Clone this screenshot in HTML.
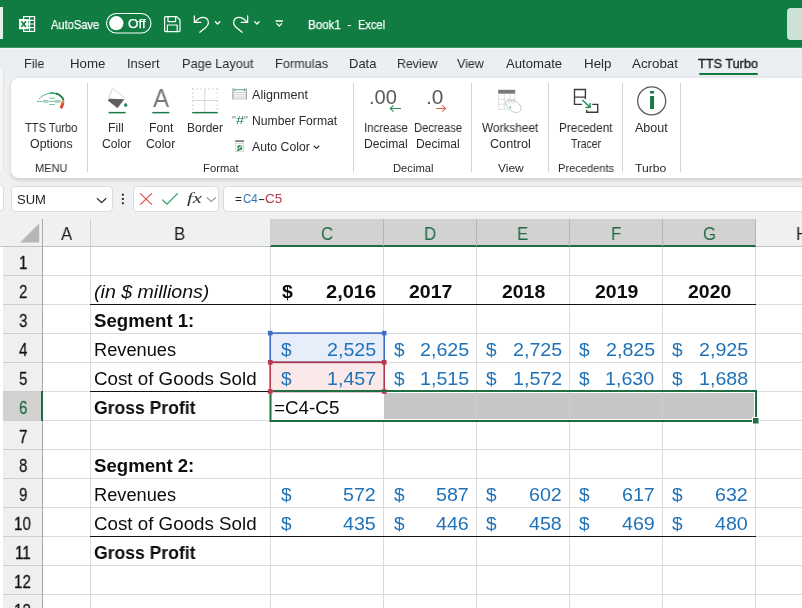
<!DOCTYPE html>
<html lang="en">
<head>
<meta charset="utf-8">
<title>Book1 - Excel</title>
<style>
html,body{margin:0;padding:0;}
body{width:802px;height:608px;overflow:hidden;position:relative;background:#fff;font-family:"Liberation Sans",sans-serif;}
.a{position:absolute;}
.t{position:absolute;line-height:1;white-space:pre;transform-origin:0 0;will-change:transform;}
#title{left:0;top:0;width:802px;height:47px;background:#107c41;}
#title2{left:0;top:47px;width:802px;height:1px;background:#3c9365;}
#chrome{left:0;top:48px;width:802px;height:198px;background:#eff0f1;}
#tabs{left:0;top:48px;width:802px;height:30px;background:#ebeff4;border-top:1px solid #f2f5f8;box-sizing:border-box;}
#ribbon{left:11px;top:78px;width:800px;height:100px;background:#fff;border-radius:8px;box-shadow:0 1.5px 4px rgba(0,0,0,.16);}
.sep{position:absolute;top:83px;width:1px;height:89px;background:#d4d4d4;}
.box{position:absolute;top:186px;height:24px;background:#fff;border:1px solid #dcdcdc;border-radius:4px;}
#grid{left:0;top:246px;width:802px;height:362px;background:#fff;}
.vl{position:absolute;top:247px;width:1px;height:361px;background:#dbdbdb;}
.hl{position:absolute;left:43px;width:759px;height:1px;background:#dbdbdb;}
.rh{position:absolute;left:3px;width:39px;height:28px;background:#efefef;border-bottom:1px solid #cfcfcf;}
.bk{position:absolute;height:1.5px;background:#111;}
</style>
</head>
<body>
<div class="a" id="title"></div>
<div class="a" id="title2"></div>
<div class="a" id="chrome"></div>
<div class="a" id="tabs"></div>
<div class="a" style="left:0;top:7px;width:3px;height:32px;background:#e3f0e8;"></div>
<div class="a" style="left:787px;top:8px;width:30px;height:32px;background:#cce2d5;border-radius:4px;"></div>
<div class="a" style="left:699px;top:72.5px;width:59px;height:2.6px;background:#107c41;border-radius:1.3px;"></div>
<div class="a" style="left:0;top:69px;width:3px;height:101px;background:#f5f7f9;border-right:1px solid #e0e4e8;"></div>
<div class="a" id="ribbon"></div>
<div class="sep" style="left:87px"></div>
<div class="sep" style="left:353px"></div>
<div class="sep" style="left:471px"></div>
<div class="sep" style="left:548px"></div>
<div class="sep" style="left:622px"></div>
<div class="sep" style="left:680px"></div>
<!-- formula bar -->
<div class="a" style="left:-2px;top:185px;width:4px;height:24px;background:#fff;border:1px solid #dcdcdc;border-radius:3px;"></div>
<div class="box" style="left:11px;width:100px;"></div>
<div class="box" style="left:133px;width:84px;"></div>
<div class="box" style="left:223px;width:600px;"></div>
<!-- column header -->
<div class="a" style="left:270px;top:219px;width:486px;height:26px;background:#d2d2d2;"></div>
<div class="a" style="left:270px;top:245px;width:486px;height:2px;background:#1e6e42;"></div>
<div class="a" id="grid" style="top:247px"></div>
<div class="a" style="left:0;top:246px;width:270px;height:1px;background:#c4c4c4;"></div>
<div class="a" style="left:756px;top:246px;width:46px;height:1px;background:#c4c4c4;"></div>
<div class="a" style="left:42px;top:219px;width:1px;height:389px;background:#a8a8a8;"></div>
<div class="a" style="left:90px;top:219px;width:1px;height:27px;background:#d0d0d0;"></div>
<div class="a" style="left:270px;top:219px;width:1px;height:27px;background:#d0d0d0;"></div>
<div class="a" style="left:383px;top:219px;width:1px;height:27px;background:#b4b4b4;"></div>
<div class="a" style="left:476px;top:219px;width:1px;height:27px;background:#b4b4b4;"></div>
<div class="a" style="left:569px;top:219px;width:1px;height:27px;background:#b4b4b4;"></div>
<div class="a" style="left:662px;top:219px;width:1px;height:27px;background:#b4b4b4;"></div>
<div class="a" style="left:755px;top:219px;width:1px;height:27px;background:#b4b4b4;"></div>
<div class="vl" style="left:90px"></div>
<div class="vl" style="left:270px"></div>
<div class="vl" style="left:383px"></div>
<div class="vl" style="left:476px"></div>
<div class="vl" style="left:569px"></div>
<div class="vl" style="left:662px"></div>
<div class="vl" style="left:755px"></div>
<div class="hl" style="top:275px"></div>
<div class="hl" style="top:304px"></div>
<div class="hl" style="top:333px"></div>
<div class="hl" style="top:362px"></div>
<div class="hl" style="top:391px"></div>
<div class="hl" style="top:420px"></div>
<div class="hl" style="top:449px"></div>
<div class="hl" style="top:478px"></div>
<div class="hl" style="top:507px"></div>
<div class="hl" style="top:536px"></div>
<div class="hl" style="top:565px"></div>
<div class="hl" style="top:594px"></div>
<div class="hl" style="top:623px"></div>
<div class="rh" style="top:247px"></div>
<div class="rh" style="top:276px"></div>
<div class="rh" style="top:305px"></div>
<div class="rh" style="top:334px"></div>
<div class="rh" style="top:363px"></div>
<div class="rh" style="top:392px;background:#d2d2d2;"></div>
<div class="a" style="left:41px;top:391px;width:2px;height:30px;background:#1e6e42;"></div>
<div class="rh" style="top:421px"></div>
<div class="rh" style="top:450px"></div>
<div class="rh" style="top:479px"></div>
<div class="rh" style="top:508px"></div>
<div class="rh" style="top:537px"></div>
<div class="rh" style="top:566px"></div>
<div class="rh" style="top:595px"></div>
<div class="bk" style="left:90px;top:303.6px;width:666px;"></div>
<div class="bk" style="left:90px;top:390.6px;width:181px;"></div>
<div class="bk" style="left:90px;top:535.6px;width:666px;"></div>
<div class="a" style="left:271px;top:334px;width:113px;height:28px;background:#e8eef9;"></div>
<div class="a" style="left:271px;top:363px;width:113px;height:28px;background:#fbe9ea;"></div>
<div class="a" style="left:384px;top:392.6px;width:370.3px;height:26.4px;background:#c6c6c6;"></div>
<div class="a" style="left:271px;top:392px;width:113px;height:28px;background:#fff;"></div>
<div class="a" style="left:476px;top:392.6px;width:1px;height:26.4px;background:#cfcfcf;"></div>
<div class="a" style="left:569px;top:392.6px;width:1px;height:26.4px;background:#cfcfcf;"></div>
<div class="a" style="left:662px;top:392.6px;width:1px;height:26.4px;background:#cfcfcf;"></div>
<svg class="a" style="left:0;top:0" width="802" height="608" viewBox="0 0 802 608">
<!-- corner triangle -->
<polygon points="39.2,223.6 39.2,242.4 20,242.4" fill="#b7b7b7"/>
<!-- range boxes -->
<rect x="270.2" y="333.1" width="114" height="29.2" fill="none" stroke="#3f6fc4" stroke-width="1.6"/>
<rect x="270.2" y="362.3" width="114" height="29.2" fill="none" stroke="#b5384b" stroke-width="1.6"/>
<g fill="#3f6fc4"><rect x="267.9" y="330.8" width="4.6" height="4.6"/><rect x="381.9" y="330.8" width="4.6" height="4.6"/></g>
<g fill="#b5384b"><rect x="267.9" y="360" width="4.6" height="4.6"/><rect x="381.9" y="360" width="4.6" height="4.6"/><rect x="267.9" y="389.2" width="4.6" height="4.6"/><rect x="381.9" y="389.2" width="4.6" height="4.6"/></g>
<!-- active selection -->
<path d="M273 391 H756 V418 M752 421 H270.5 V394" fill="none" stroke="#1e6e42" stroke-width="2"/>
<rect x="752.5" y="417.5" width="6.5" height="6.5" fill="#1e6e42" stroke="#fff" stroke-width="1"/>
<!-- excel logo -->
<g stroke="#fff" fill="none" stroke-width="1.2">
<rect x="23.6" y="16.6" width="11" height="14.8"/>
<path d="M23.6 20.4H34.6M23.6 24H34.6M23.6 27.6H34.6M29.6 16.6V31.4"/>
</g>
<rect x="19" y="19" width="9.4" height="10.2" fill="#fff"/>
<path d="M21.4 21.2L26 27M26 21.2L21.4 27" stroke="#107c41" stroke-width="1.5" fill="none"/>
<!-- autosave toggle -->
<rect x="106.5" y="13.5" width="44.5" height="19.5" rx="9.75" fill="none" stroke="#fff" stroke-width="1.1"/>
<circle cx="116.3" cy="23.2" r="7.1" fill="#fff"/>
<!-- save -->
<g stroke="#fff" fill="none" stroke-width="1.2" stroke-linejoin="round">
<path d="M164.6 17.6a1 1 0 0 1 1-1H176.6L180 20V30.6a1 1 0 0 1-1 1H165.6a1 1 0 0 1-1-1Z"/>
<path d="M168 16.8V21.6H175.6V16.8M167.4 31.4V25H177.2V31.4"/>
</g>
<!-- undo -->
<g stroke="#fff" fill="none" stroke-width="1.3" stroke-linecap="round" stroke-linejoin="round">
<path d="M194.4 16V22.4H200.8"/>
<path d="M195 22.2C198.4 17.8 203.4 15.8 206.6 18.6C209.4 21.2 208.8 24.6 206 27.2L199.8 32.2"/>
<path d="M215.4 21.8L217.6 24L219.8 21.8"/>
<!-- redo -->
<path d="M247.6 16V22.4H241.2"/>
<path d="M247 22.2C243.6 17.8 238.6 15.8 235.4 18.6C232.6 21.2 233.2 24.6 236 27.2L242.2 32.2"/>
<path d="M254.8 21.8L257 24L259.2 21.8"/>
<!-- customize -->
<path d="M276 21H282.4M276.8 23.6L279.2 26L281.6 23.6"/>
</g>
<!-- ===== ribbon icons ===== -->
<defs>
<linearGradient id="gArc" x1="0" y1="0" x2="1" y2="0"><stop offset="0" stop-color="#35b36a"/><stop offset="0.6" stop-color="#1e8a4c"/><stop offset="1" stop-color="#14643a"/></linearGradient>
<linearGradient id="gTip" x1="0" y1="0" x2="0" y2="1"><stop offset="0" stop-color="#e8a35a"/><stop offset="0.45" stop-color="#e8532d"/><stop offset="1" stop-color="#d52b1e"/></linearGradient>
</defs>
<!-- TTS turbo gauge -->
<path d="M39.1 98.9C43 94.6 49 92.6 54 93.2" fill="none" stroke="#3aa96a" stroke-width="0.9"/>
<path d="M50 92.9C53 92.6 56 93.2 58 94.4" fill="none" stroke="#2a9458" stroke-width="1.2"/>
<path d="M56 93.4C60 95 63 97.4 63.6 100.6" fill="none" stroke="#1d7a45" stroke-width="1.8"/>
<path d="M61.8 101L64.1 100.4L64.2 104.6L62.2 108.8L59.8 107.8Z" fill="url(#gTip)"/>
<g stroke="#3aa56a" stroke-width="0.7" fill="none"><path d="M36.6 101.4H42.6M48.8 101.4H54.6M43 100.7H48.4M54.8 100.7H60.6M43 102.1H48.4M54.8 102.1H60.6M49.4 98.2H54.8M49.4 104.5H54.8"/></g>
<!-- Fill color bucket -->
<path d="M112.5 88.3L125 97.9L117.5 107.9L107.9 100.4Z" fill="none" stroke="#cccccc" stroke-width="0.8"/>
<path d="M107.9 100.4L109.6 98.8L124.2 99.2L117.5 107.9Z" fill="#5e5e5e"/>
<path d="M125.7 102.7L127.1 104.6a1.5 1.5 0 1 1-2.8 0Z" fill="#1e7b4a"/>
<rect x="108.6" y="111.9" width="17" height="1.5" fill="#1e7b4a"/>
<!-- Font color underline -->
<rect x="152.3" y="111.9" width="17.1" height="1.5" fill="#1e7b4a"/>
<!-- Border icon -->
<g stroke="#c4c4c4" stroke-width="1" fill="none" stroke-dasharray="1.4 2.6"><path d="M192.4 89H217.8M192.8 88.6V112M217.2 88.6V112"/></g>
<path d="M204.8 89V112M192.4 100.5H217.6" stroke="#d6d6d6" stroke-width="1" fill="none"/>
<rect x="192.2" y="111.9" width="25.6" height="1.5" fill="#1e7b4a"/>
<!-- Alignment icon -->
<g fill="none"><path d="M232.9 88.2V99.4M246.3 88.2V99.4" stroke="#9a9a9a" stroke-width="1.1"/>
<path d="M233.4 92.5H245.8M233.4 94.8H245.8M233.4 97.1H245.8M233.4 99H245.8" stroke="#bdbdbd" stroke-width="0.8"/>
<path d="M234 89.8H245.2M235.2 88.8L234 89.8L235.2 90.8M244 88.8L245.2 89.8L244 90.8" stroke="#2c8a58" stroke-width="0.8"/></g>
<!-- Auto color icon -->
<rect x="235.2" y="140.3" width="8.8" height="1.6" fill="#6e6e6e"/>
<rect x="235.6" y="143.4" width="8" height="8" fill="#fff" stroke="#d0d0d0" stroke-width="0.8"/>
<path d="M237.4 145.2H242.2V150H237.4Z" fill="#3c9a62"/>
<path d="M237 150.4L242.6 144.8" stroke="#fff" stroke-width="1"/>
<path d="M236.6 151.2L238.8 148.6L239.4 150.8Z" fill="#1e6e42"/>
<!-- Auto color chevron -->
<path d="M313.8 145.8L316.5 148.4L319.2 145.8" fill="none" stroke="#333" stroke-width="1.2"/>
<!-- decimal arrows -->
<path d="M401 108.5H390.4M393.6 105.3L390.2 108.5L393.6 111.7" fill="none" stroke="#2c8f5c" stroke-width="1.1"/>
<path d="M436 108.5H445.4M442.2 105.3L445.6 108.5L442.2 111.7" fill="none" stroke="#d4694a" stroke-width="1.1"/>
<!-- Worksheet control -->
<rect x="498.2" y="89.8" width="17" height="3.9" fill="#7a7a7a"/>
<g stroke="#dcdcdc" stroke-width="0.9" fill="none"><path d="M498.6 93.7V109.5M504.3 93.7V109.5M510 93.7V109.5M514.8 93.7V109.5M498.2 99.4H515M498.2 104.2H515M498.2 109.3H515"/></g>
<path d="M505.6 102.2C507.4 100.2 510.4 100 513.6 100.6C517.4 101.4 520.6 105 521.2 108.2C521.6 111 518.4 113 515.2 112.4C511.6 111.8 508.6 108.6 506.6 105.6Z" fill="#fff" stroke="#b3c8bc" stroke-width="0.9"/>
<path d="M508.4 101.4L510.2 104.4M510.8 100.6L512.4 103.6M513.4 100.8L514.6 103.4" stroke="#b7cdbf" stroke-width="0.8" fill="none"/>
<circle cx="510.4" cy="107.2" r="0.8" fill="#3c7a58"/>
<!-- Precedent tracer -->
<g fill="none" stroke="#3a3a3a" stroke-width="1.35"><path d="M582 104.4H574.5V89.5H585.4V99.1M574.5 97.1H585.4"/><path d="M592.3 104.4H597.7V112.2H586.7V110.1"/></g>
<path d="M582.3 100.1L589.8 107M590.1 103L590.1 107.4L585.4 107.5" fill="none" stroke="#1e8a55" stroke-width="1.4"/>
<!-- About -->
<circle cx="651.7" cy="100.9" r="14" fill="none" stroke="#595959" stroke-width="1.3"/>
<!-- formula bar icons -->
<path d="M97 198.3L101.6 202.6L106.2 198.3" fill="none" stroke="#333" stroke-width="1.3"/>
<g fill="#222"><rect x="121.9" y="193.7" width="1.9" height="1.9"/><rect x="121.9" y="198" width="1.9" height="1.9"/><rect x="121.9" y="202.3" width="1.9" height="1.9"/></g>
<path d="M140.2 193.4L151.9 204.6M151.9 193.4L140.2 204.6" fill="none" stroke="#e0484e" stroke-width="1.2"/>
<path d="M162.2 199.6L167 204.2L177.7 193.4" fill="none" stroke="#2e9e62" stroke-width="1.3"/>
<path d="M206.8 197.5L211.3 201.5L215.8 197.5" fill="none" stroke="#9a9a9a" stroke-width="1.2"/>

</svg>
<span class="t" style="left:50.90px;top:19.04px;font:normal 400 12px/1 'Liberation Sans', sans-serif;color:#ffffff;transform:scaleX(0.9272);-webkit-text-stroke:0.25px #fff;">AutoSave</span>
<span class="t" style="left:127.92px;top:18.04px;font:normal 400 12px/1 'Liberation Sans', sans-serif;color:#ffffff;transform:scaleX(1.1164);-webkit-text-stroke:0.25px #fff;">Off</span>
<span class="t" style="left:307.85px;top:18.74px;font:normal 400 12px/1 'Liberation Sans', sans-serif;color:#ffffff;transform:scaleX(0.9645);-webkit-text-stroke:0.25px #fff;">Book1</span>
<span class="t" style="left:347.30px;top:18.74px;font:normal 400 12px/1 'Liberation Sans', sans-serif;color:#ffffff;transform:scaleX(1.1700);">-</span>
<span class="t" style="left:358.08px;top:18.74px;font:normal 400 12px/1 'Liberation Sans', sans-serif;color:#ffffff;transform:scaleX(0.9204);-webkit-text-stroke:0.25px #fff;">Excel</span>
<span class="t" style="left:24.11px;top:57.20px;font:normal 400 13px/1 'Liberation Sans', sans-serif;color:#2b2b2b;transform:scaleX(0.9725);">File</span>
<span class="t" style="left:70.37px;top:57.20px;font:normal 400 13px/1 'Liberation Sans', sans-serif;color:#2b2b2b;transform:scaleX(1.0198);">Home</span>
<span class="t" style="left:126.54px;top:57.20px;font:normal 400 13px/1 'Liberation Sans', sans-serif;color:#2b2b2b;transform:scaleX(0.9989);">Insert</span>
<span class="t" style="left:181.61px;top:57.20px;font:normal 400 13px/1 'Liberation Sans', sans-serif;color:#2b2b2b;transform:scaleX(0.9774);">Page Layout</span>
<span class="t" style="left:275.00px;top:57.20px;font:normal 400 13px/1 'Liberation Sans', sans-serif;color:#2b2b2b;transform:scaleX(0.9806);">Formulas</span>
<span class="t" style="left:348.60px;top:57.20px;font:normal 400 13px/1 'Liberation Sans', sans-serif;color:#2b2b2b;transform:scaleX(0.9863);">Data</span>
<span class="t" style="left:396.63px;top:57.20px;font:normal 400 13px/1 'Liberation Sans', sans-serif;color:#2b2b2b;transform:scaleX(0.9476);">Review</span>
<span class="t" style="left:457.06px;top:57.20px;font:normal 400 13px/1 'Liberation Sans', sans-serif;color:#2b2b2b;transform:scaleX(0.9600);">View</span>
<span class="t" style="left:505.87px;top:57.20px;font:normal 400 13px/1 'Liberation Sans', sans-serif;color:#2b2b2b;transform:scaleX(1.0086);">Automate</span>
<span class="t" style="left:583.66px;top:57.20px;font:normal 400 13px/1 'Liberation Sans', sans-serif;color:#2b2b2b;transform:scaleX(1.0284);">Help</span>
<span class="t" style="left:632.07px;top:57.20px;font:normal 400 13px/1 'Liberation Sans', sans-serif;color:#2b2b2b;transform:scaleX(1.0255);">Acrobat</span>
<span class="t" style="left:698.45px;top:57.20px;font:normal 400 13px/1 'Liberation Sans', sans-serif;color:#1a1a1a;transform:scaleX(0.9759);-webkit-text-stroke:0.35px #1a1a1a;">TTS Turbo</span>
<span class="t" style="left:25.00px;top:121.64px;font:normal 400 12px/1 'Liberation Sans', sans-serif;color:#2b2b2b;transform:scaleX(0.9241);">TTS Turbo</span>
<span class="t" style="left:29.77px;top:138.24px;font:normal 400 12px/1 'Liberation Sans', sans-serif;color:#2b2b2b;transform:scaleX(1.0318);">Options</span>
<span class="t" style="left:34.76px;top:162.92px;font:normal 400 11.2px/1 'Liberation Sans', sans-serif;color:#2b2b2b;transform:scaleX(0.9841);">MENU</span>
<span class="t" style="left:108.09px;top:121.64px;font:normal 400 12px/1 'Liberation Sans', sans-serif;color:#2b2b2b;transform:scaleX(1.0254);">Fill</span>
<span class="t" style="left:101.53px;top:138.24px;font:normal 400 12px/1 'Liberation Sans', sans-serif;color:#2b2b2b;transform:scaleX(1.0127);">Color</span>
<span class="t" style="left:148.60px;top:121.64px;font:normal 400 12px/1 'Liberation Sans', sans-serif;color:#2b2b2b;transform:scaleX(1.0195);">Font</span>
<span class="t" style="left:145.63px;top:138.24px;font:normal 400 12px/1 'Liberation Sans', sans-serif;color:#2b2b2b;transform:scaleX(1.0199);">Color</span>
<span class="t" style="left:186.63px;top:121.64px;font:normal 400 12px/1 'Liberation Sans', sans-serif;color:#2b2b2b;transform:scaleX(0.9865);">Border</span>
<span class="t" style="left:251.96px;top:89.04px;font:normal 400 12px/1 'Liberation Sans', sans-serif;color:#2b2b2b;transform:scaleX(1.0480);">Alignment</span>
<span class="t" style="left:251.60px;top:114.74px;font:normal 400 12px/1 'Liberation Sans', sans-serif;color:#2b2b2b;transform:scaleX(1.0138);">Number Format</span>
<span class="t" style="left:251.87px;top:140.64px;font:normal 400 12px/1 'Liberation Sans', sans-serif;color:#2b2b2b;transform:scaleX(1.0199);">Auto Color</span>
<span class="t" style="left:202.94px;top:162.92px;font:normal 400 11.2px/1 'Liberation Sans', sans-serif;color:#2b2b2b;transform:scaleX(1.0079);">Format</span>
<span class="t" style="left:363.61px;top:121.64px;font:normal 400 12px/1 'Liberation Sans', sans-serif;color:#2b2b2b;transform:scaleX(0.9548);">Increase</span>
<span class="t" style="left:363.61px;top:138.24px;font:normal 400 12px/1 'Liberation Sans', sans-serif;color:#2b2b2b;transform:scaleX(1.0085);">Decimal</span>
<span class="t" style="left:413.67px;top:121.64px;font:normal 400 12px/1 'Liberation Sans', sans-serif;color:#2b2b2b;transform:scaleX(0.9345);">Decrease</span>
<span class="t" style="left:415.61px;top:138.24px;font:normal 400 12px/1 'Liberation Sans', sans-serif;color:#2b2b2b;transform:scaleX(1.0085);">Decimal</span>
<span class="t" style="left:392.55px;top:162.92px;font:normal 400 11.2px/1 'Liberation Sans', sans-serif;color:#2b2b2b;transform:scaleX(1.0047);">Decimal</span>
<span class="t" style="left:481.92px;top:121.64px;font:normal 400 12px/1 'Liberation Sans', sans-serif;color:#2b2b2b;transform:scaleX(0.9848);">Worksheet</span>
<span class="t" style="left:489.61px;top:138.24px;font:normal 400 12px/1 'Liberation Sans', sans-serif;color:#2b2b2b;transform:scaleX(1.0523);">Control</span>
<span class="t" style="left:497.62px;top:162.92px;font:normal 400 11.2px/1 'Liberation Sans', sans-serif;color:#2b2b2b;transform:scaleX(1.0664);">View</span>
<span class="t" style="left:558.63px;top:121.64px;font:normal 400 12px/1 'Liberation Sans', sans-serif;color:#2b2b2b;transform:scaleX(0.9778);">Precedent</span>
<span class="t" style="left:570.91px;top:138.24px;font:normal 400 12px/1 'Liberation Sans', sans-serif;color:#2b2b2b;transform:scaleX(0.8797);">Tracer</span>
<span class="t" style="left:557.76px;top:162.92px;font:normal 400 11.2px/1 'Liberation Sans', sans-serif;color:#2b2b2b;transform:scaleX(0.9891);">Precedents</span>
<span class="t" style="left:635.07px;top:121.64px;font:normal 400 12px/1 'Liberation Sans', sans-serif;color:#2b2b2b;transform:scaleX(1.0402);">About</span>
<span class="t" style="left:635.46px;top:162.92px;font:normal 400 11.2px/1 'Liberation Sans', sans-serif;color:#2b2b2b;transform:scaleX(1.0863);">Turbo</span>
<span class="t" style="left:369.48px;top:88.49px;font:normal 400 19.5px/1 'Liberation Sans', sans-serif;color:#5a5a5a;transform:scaleX(1.0314);">.00</span>
<span class="t" style="left:425.92px;top:88.49px;font:normal 400 19.5px/1 'Liberation Sans', sans-serif;color:#5a5a5a;transform:scaleX(1.0673);">.0</span>
<span class="t" style="left:152.70px;top:85.51px;font:normal 400 25.5px/1 'Liberation Sans', sans-serif;color:#787878;transform:scaleX(0.9534);">A</span>
<span class="t" style="left:647.54px;top:88.86px;font:normal 700 24.5px/1 'Liberation Sans', sans-serif;color:#1a7a48;transform:scaleX(1.1993);">i</span>
<span class="t" style="left:232.09px;top:115.09px;font:normal 400 11px/1 'Liberation Sans', sans-serif;color:#7a7a7a;transform:scaleX(0.9571);">"</span>
<span class="t" style="left:235.84px;top:115.09px;font:normal 400 11px/1 'Liberation Sans', sans-serif;color:#1e7b4a;transform:scaleX(1.3611);">#</span>
<span class="t" style="left:243.89px;top:115.09px;font:normal 400 11px/1 'Liberation Sans', sans-serif;color:#7a7a7a;transform:scaleX(0.9571);">"</span>
<span class="t" style="left:186.96px;top:190.48px;font:italic 400 15.5px/1 'Liberation Serif', serif;color:#333;transform:scaleX(1.3320);">fx</span>
<span class="t" style="left:17.16px;top:192.70px;font:normal 400 13px/1 'Liberation Sans', sans-serif;color:#1f1f1f;transform:scaleX(0.9921);">SUM</span>
<span class="t" style="left:235.12px;top:192.27px;font:normal 400 13.5px/1 'Liberation Sans', sans-serif;color:#1f1f1f;transform:scaleX(0.8695);">=</span>
<span class="t" style="left:242.60px;top:192.27px;font:normal 400 13.5px/1 'Liberation Sans', sans-serif;color:#2f6fb7;transform:scaleX(0.8424);">C4</span>
<span class="t" style="left:257.84px;top:192.27px;font:normal 400 13.5px/1 'Liberation Sans', sans-serif;color:#1f1f1f;transform:scaleX(1.6196);">-</span>
<span class="t" style="left:265.49px;top:192.27px;font:normal 400 13.5px/1 'Liberation Sans', sans-serif;color:#b23a48;transform:scaleX(0.9890);">C5</span>
<span class="t" style="left:61.46px;top:223.52px;font:normal 400 19px/1 'Liberation Sans', sans-serif;color:#1f1f1f;transform:scaleX(0.8800);">A</span>
<span class="t" style="left:174.35px;top:223.52px;font:normal 400 19px/1 'Liberation Sans', sans-serif;color:#1f1f1f;transform:scaleX(0.8800);">B</span>
<span class="t" style="left:321.07px;top:223.52px;font:normal 400 19px/1 'Liberation Sans', sans-serif;color:#1e6b41;transform:scaleX(0.8800);">C</span>
<span class="t" style="left:423.67px;top:223.52px;font:normal 400 19px/1 'Liberation Sans', sans-serif;color:#1e6b41;transform:scaleX(0.8800);">D</span>
<span class="t" style="left:517.08px;top:223.52px;font:normal 400 19px/1 'Liberation Sans', sans-serif;color:#1e6b41;transform:scaleX(0.8800);">E</span>
<span class="t" style="left:610.53px;top:223.52px;font:normal 400 19px/1 'Liberation Sans', sans-serif;color:#1e6b41;transform:scaleX(0.8800);">F</span>
<span class="t" style="left:702.69px;top:223.52px;font:normal 400 19px/1 'Liberation Sans', sans-serif;color:#1e6b41;transform:scaleX(0.8800);">G</span>
<span class="t" style="left:795.80px;top:223.52px;font:normal 400 19px/1 'Liberation Sans', sans-serif;color:#1f1f1f;transform:scaleX(0.8800);">H</span>
<span class="t" style="left:18.73px;top:254.07px;font:normal 400 18.7px/1 'Liberation Sans', sans-serif;color:#141414;transform:scaleX(0.8100);-webkit-text-stroke:0.3px #141414;">1</span>
<span class="t" style="left:18.99px;top:283.07px;font:normal 400 18.7px/1 'Liberation Sans', sans-serif;color:#141414;transform:scaleX(0.8100);-webkit-text-stroke:0.3px #141414;">2</span>
<span class="t" style="left:18.97px;top:312.07px;font:normal 400 18.7px/1 'Liberation Sans', sans-serif;color:#141414;transform:scaleX(0.8100);-webkit-text-stroke:0.3px #141414;">3</span>
<span class="t" style="left:19.03px;top:341.07px;font:normal 400 18.7px/1 'Liberation Sans', sans-serif;color:#141414;transform:scaleX(0.8100);-webkit-text-stroke:0.3px #141414;">4</span>
<span class="t" style="left:18.95px;top:370.07px;font:normal 400 18.7px/1 'Liberation Sans', sans-serif;color:#141414;transform:scaleX(0.8100);-webkit-text-stroke:0.3px #141414;">5</span>
<span class="t" style="left:18.95px;top:399.07px;font:normal 400 18.7px/1 'Liberation Sans', sans-serif;color:#1e6b41;transform:scaleX(0.8100);-webkit-text-stroke:0.3px #1e6b41;">6</span>
<span class="t" style="left:18.89px;top:428.07px;font:normal 400 18.7px/1 'Liberation Sans', sans-serif;color:#141414;transform:scaleX(0.8100);-webkit-text-stroke:0.3px #141414;">7</span>
<span class="t" style="left:18.98px;top:457.07px;font:normal 400 18.7px/1 'Liberation Sans', sans-serif;color:#141414;transform:scaleX(0.8100);-webkit-text-stroke:0.3px #141414;">8</span>
<span class="t" style="left:18.98px;top:486.07px;font:normal 400 18.7px/1 'Liberation Sans', sans-serif;color:#141414;transform:scaleX(0.8100);-webkit-text-stroke:0.3px #141414;">9</span>
<span class="t" style="left:14.39px;top:515.07px;font:normal 400 18.7px/1 'Liberation Sans', sans-serif;color:#141414;transform:scaleX(0.8100);-webkit-text-stroke:0.3px #141414;">10</span>
<span class="t" style="left:15.08px;top:544.07px;font:normal 400 18.7px/1 'Liberation Sans', sans-serif;color:#141414;transform:scaleX(0.8100);-webkit-text-stroke:0.3px #141414;">11</span>
<span class="t" style="left:14.45px;top:573.07px;font:normal 400 18.7px/1 'Liberation Sans', sans-serif;color:#141414;transform:scaleX(0.8100);-webkit-text-stroke:0.3px #141414;">12</span>
<span class="t" style="left:14.43px;top:602.07px;font:normal 400 18.7px/1 'Liberation Sans', sans-serif;color:#141414;transform:scaleX(0.8100);-webkit-text-stroke:0.3px #141414;">13</span>
<span class="t" style="left:93.60px;top:282.76px;font:italic 400 18px/1 'Liberation Sans', sans-serif;color:#0d0d0d;transform:scaleX(1.0884);">(in $ millions)</span>
<span class="t" style="left:93.90px;top:311.76px;font:normal 700 18px/1 'Liberation Sans', sans-serif;color:#0d0d0d;transform:scaleX(1.0339);">Segment 1:</span>
<span class="t" style="left:94.28px;top:340.76px;font:normal 400 18px/1 'Liberation Sans', sans-serif;color:#0d0d0d;transform:scaleX(1.0126);">Revenues</span>
<span class="t" style="left:94.11px;top:369.76px;font:normal 400 18px/1 'Liberation Sans', sans-serif;color:#0d0d0d;transform:scaleX(1.0419);">Cost of Goods Sold</span>
<span class="t" style="left:94.27px;top:398.76px;font:normal 700 18px/1 'Liberation Sans', sans-serif;color:#0d0d0d;transform:scaleX(0.9759);">Gross Profit</span>
<span class="t" style="left:93.90px;top:456.76px;font:normal 700 18px/1 'Liberation Sans', sans-serif;color:#0d0d0d;transform:scaleX(1.0339);">Segment 2:</span>
<span class="t" style="left:94.28px;top:485.76px;font:normal 400 18px/1 'Liberation Sans', sans-serif;color:#0d0d0d;transform:scaleX(1.0126);">Revenues</span>
<span class="t" style="left:94.11px;top:514.76px;font:normal 400 18px/1 'Liberation Sans', sans-serif;color:#0d0d0d;transform:scaleX(1.0419);">Cost of Goods Sold</span>
<span class="t" style="left:94.27px;top:543.76px;font:normal 700 18px/1 'Liberation Sans', sans-serif;color:#0d0d0d;transform:scaleX(0.9759);">Gross Profit</span>
<span class="t" style="left:281.85px;top:281.92px;font:normal 700 19px/1 'Liberation Sans', sans-serif;color:#0d0d0d;transform:scaleX(1.0274);">$</span>
<span class="t" style="left:326.30px;top:281.92px;font:normal 700 19px/1 'Liberation Sans', sans-serif;color:#0d0d0d;transform:scaleX(1.0546);">2,016</span>
<span class="t" style="left:408.52px;top:281.92px;font:normal 700 19px/1 'Liberation Sans', sans-serif;color:#0d0d0d;transform:scaleX(1.0266);">2017</span>
<span class="t" style="left:501.52px;top:281.92px;font:normal 700 19px/1 'Liberation Sans', sans-serif;color:#0d0d0d;transform:scaleX(1.0222);">2018</span>
<span class="t" style="left:594.52px;top:281.92px;font:normal 700 19px/1 'Liberation Sans', sans-serif;color:#0d0d0d;transform:scaleX(1.0244);">2019</span>
<span class="t" style="left:687.52px;top:281.92px;font:normal 700 19px/1 'Liberation Sans', sans-serif;color:#0d0d0d;transform:scaleX(1.0258);">2020</span>
<span class="t" style="left:280.71px;top:339.92px;font:normal 400 19px/1 'Liberation Sans', sans-serif;color:#1f72b8;transform:scaleX(0.9741);">$</span>
<span class="t" style="left:326.98px;top:339.92px;font:normal 400 19px/1 'Liberation Sans', sans-serif;color:#1f72b8;transform:scaleX(1.0350);">2,525</span>
<span class="t" style="left:393.51px;top:339.92px;font:normal 400 19px/1 'Liberation Sans', sans-serif;color:#1f72b8;transform:scaleX(0.9741);">$</span>
<span class="t" style="left:419.78px;top:339.92px;font:normal 400 19px/1 'Liberation Sans', sans-serif;color:#1f72b8;transform:scaleX(1.0350);">2,625</span>
<span class="t" style="left:486.31px;top:339.92px;font:normal 400 19px/1 'Liberation Sans', sans-serif;color:#1f72b8;transform:scaleX(0.9741);">$</span>
<span class="t" style="left:512.78px;top:339.92px;font:normal 400 19px/1 'Liberation Sans', sans-serif;color:#1f72b8;transform:scaleX(1.0350);">2,725</span>
<span class="t" style="left:579.31px;top:339.92px;font:normal 400 19px/1 'Liberation Sans', sans-serif;color:#1f72b8;transform:scaleX(0.9741);">$</span>
<span class="t" style="left:605.58px;top:339.92px;font:normal 400 19px/1 'Liberation Sans', sans-serif;color:#1f72b8;transform:scaleX(1.0350);">2,825</span>
<span class="t" style="left:672.11px;top:339.92px;font:normal 400 19px/1 'Liberation Sans', sans-serif;color:#1f72b8;transform:scaleX(0.9741);">$</span>
<span class="t" style="left:698.78px;top:339.92px;font:normal 400 19px/1 'Liberation Sans', sans-serif;color:#1f72b8;transform:scaleX(1.0350);">2,925</span>
<span class="t" style="left:280.71px;top:368.92px;font:normal 400 19px/1 'Liberation Sans', sans-serif;color:#1f72b8;transform:scaleX(0.9741);">$</span>
<span class="t" style="left:327.10px;top:368.92px;font:normal 400 19px/1 'Liberation Sans', sans-serif;color:#1f72b8;transform:scaleX(1.0350);">1,457</span>
<span class="t" style="left:393.51px;top:368.92px;font:normal 400 19px/1 'Liberation Sans', sans-serif;color:#1f72b8;transform:scaleX(0.9741);">$</span>
<span class="t" style="left:419.78px;top:368.92px;font:normal 400 19px/1 'Liberation Sans', sans-serif;color:#1f72b8;transform:scaleX(1.0350);">1,515</span>
<span class="t" style="left:486.31px;top:368.92px;font:normal 400 19px/1 'Liberation Sans', sans-serif;color:#1f72b8;transform:scaleX(0.9741);">$</span>
<span class="t" style="left:512.90px;top:368.92px;font:normal 400 19px/1 'Liberation Sans', sans-serif;color:#1f72b8;transform:scaleX(1.0350);">1,572</span>
<span class="t" style="left:579.31px;top:368.92px;font:normal 400 19px/1 'Liberation Sans', sans-serif;color:#1f72b8;transform:scaleX(0.9741);">$</span>
<span class="t" style="left:605.28px;top:368.92px;font:normal 400 19px/1 'Liberation Sans', sans-serif;color:#1f72b8;transform:scaleX(1.0350);">1,630</span>
<span class="t" style="left:672.11px;top:368.92px;font:normal 400 19px/1 'Liberation Sans', sans-serif;color:#1f72b8;transform:scaleX(0.9741);">$</span>
<span class="t" style="left:698.81px;top:368.92px;font:normal 400 19px/1 'Liberation Sans', sans-serif;color:#1f72b8;transform:scaleX(1.0350);">1,688</span>
<span class="t" style="left:280.71px;top:484.92px;font:normal 400 19px/1 'Liberation Sans', sans-serif;color:#1f72b8;transform:scaleX(0.9741);">$</span>
<span class="t" style="left:343.46px;top:484.92px;font:normal 400 19px/1 'Liberation Sans', sans-serif;color:#1f72b8;transform:scaleX(1.0350);">572</span>
<span class="t" style="left:393.51px;top:484.92px;font:normal 400 19px/1 'Liberation Sans', sans-serif;color:#1f72b8;transform:scaleX(0.9741);">$</span>
<span class="t" style="left:436.26px;top:484.92px;font:normal 400 19px/1 'Liberation Sans', sans-serif;color:#1f72b8;transform:scaleX(1.0350);">587</span>
<span class="t" style="left:486.31px;top:484.92px;font:normal 400 19px/1 'Liberation Sans', sans-serif;color:#1f72b8;transform:scaleX(0.9741);">$</span>
<span class="t" style="left:529.26px;top:484.92px;font:normal 400 19px/1 'Liberation Sans', sans-serif;color:#1f72b8;transform:scaleX(1.0350);">602</span>
<span class="t" style="left:579.31px;top:484.92px;font:normal 400 19px/1 'Liberation Sans', sans-serif;color:#1f72b8;transform:scaleX(0.9741);">$</span>
<span class="t" style="left:622.06px;top:484.92px;font:normal 400 19px/1 'Liberation Sans', sans-serif;color:#1f72b8;transform:scaleX(1.0350);">617</span>
<span class="t" style="left:672.11px;top:484.92px;font:normal 400 19px/1 'Liberation Sans', sans-serif;color:#1f72b8;transform:scaleX(0.9741);">$</span>
<span class="t" style="left:715.26px;top:484.92px;font:normal 400 19px/1 'Liberation Sans', sans-serif;color:#1f72b8;transform:scaleX(1.0350);">632</span>
<span class="t" style="left:280.71px;top:513.92px;font:normal 400 19px/1 'Liberation Sans', sans-serif;color:#1f72b8;transform:scaleX(0.9741);">$</span>
<span class="t" style="left:343.15px;top:513.92px;font:normal 400 19px/1 'Liberation Sans', sans-serif;color:#1f72b8;transform:scaleX(1.0350);">435</span>
<span class="t" style="left:393.51px;top:513.92px;font:normal 400 19px/1 'Liberation Sans', sans-serif;color:#1f72b8;transform:scaleX(0.9741);">$</span>
<span class="t" style="left:435.96px;top:513.92px;font:normal 400 19px/1 'Liberation Sans', sans-serif;color:#1f72b8;transform:scaleX(1.0350);">446</span>
<span class="t" style="left:486.31px;top:513.92px;font:normal 400 19px/1 'Liberation Sans', sans-serif;color:#1f72b8;transform:scaleX(0.9741);">$</span>
<span class="t" style="left:528.96px;top:513.92px;font:normal 400 19px/1 'Liberation Sans', sans-serif;color:#1f72b8;transform:scaleX(1.0350);">458</span>
<span class="t" style="left:579.31px;top:513.92px;font:normal 400 19px/1 'Liberation Sans', sans-serif;color:#1f72b8;transform:scaleX(0.9741);">$</span>
<span class="t" style="left:621.79px;top:513.92px;font:normal 400 19px/1 'Liberation Sans', sans-serif;color:#1f72b8;transform:scaleX(1.0350);">469</span>
<span class="t" style="left:672.11px;top:513.92px;font:normal 400 19px/1 'Liberation Sans', sans-serif;color:#1f72b8;transform:scaleX(0.9741);">$</span>
<span class="t" style="left:714.89px;top:513.92px;font:normal 400 19px/1 'Liberation Sans', sans-serif;color:#1f72b8;transform:scaleX(1.0350);">480</span>
<span class="t" style="left:274.13px;top:398.76px;font:normal 400 18px/1 'Liberation Sans', sans-serif;color:#0d0d0d;transform:scaleX(1.0454);">=C4-C5</span>
</body>
</html>
